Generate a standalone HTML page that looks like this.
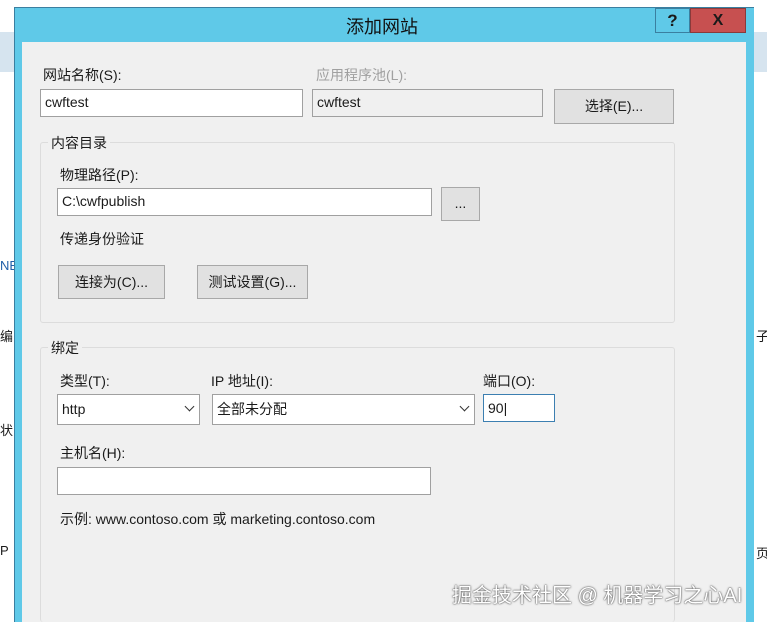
<!DOCTYPE html><html style="overflow:hidden;height:622px"><head><meta charset="utf-8"><style>
html,body{margin:0;overflow:hidden}
body{width:767px;height:622px;background:#fff;position:relative;font-family:"Liberation Sans","Noto Sans CJK SC",sans-serif;font-size:14px;color:#1a1a1a}
.a{position:absolute}
.in{position:absolute;background:#fff;border:1px solid #a0a0a0;box-sizing:border-box;padding-left:4px;line-height:24px;font-size:14px}
.btn{position:absolute;background:#e1e1e1;border:1px solid #a8a8a8;box-sizing:border-box;text-align:center;font-size:14px}
.grp{position:absolute;border:1px solid #dcdcdc;border-radius:3px;box-sizing:border-box}
.chev{position:absolute;right:6px;top:8px;width:6px;height:6px;border-right:1.5px solid #333;border-bottom:1.5px solid #333;transform:rotate(45deg)}
</style></head><body>
<div class="a" style="left:0;top:32px;width:14px;height:40px;background:#d6e4ef"></div>
<div class="a" style="left:752px;top:32px;width:15px;height:40px;background:#d6e4ef"></div>
<div class="a" style="left:0;top:258px;font-size:13px;color:#1f5fa8">NE</div>
<div class="a" style="left:0;top:326px;font-size:13px">编</div>
<div class="a" style="left:0;top:420px;font-size:13px">状</div>
<div class="a" style="left:0;top:543px;font-size:13px">P</div>
<div class="a" style="left:756px;top:326px;font-size:13px">子</div>
<div class="a" style="left:756px;top:543px;font-size:13px">页</div>
<div class="a" style="left:14px;top:7px;width:739px;height:615px;background:#5fc9e8;border-left:1px solid #3a7fa0;border-top:1px solid #3a7fa0"></div>
<div class="a" style="left:22px;top:42px;width:724px;height:580px;background:#f0f0f0"></div>
<div class="a" style="left:346px;top:13px;font-size:18px;color:#111">添加网站</div>
<div class="a" style="left:655px;top:8px;width:35px;height:25px;border:1px solid #3a7fa0;box-sizing:border-box;text-align:center;font-weight:bold;font-size:17px;line-height:23px">?</div>
<div class="a" style="left:690px;top:8px;width:56px;height:25px;background:#c75050;border:1px solid #8a3a3a;box-sizing:border-box;text-align:center;font-weight:bold;font-size:16px;line-height:23px">X</div>
<div class="a" style="left:43px;top:65px">网站名称(S):</div>
<div class="a" style="left:316px;top:65px;color:#a0a0a0">应用程序池(L):</div>
<div class="in" style="left:40px;top:89px;width:263px;height:28px">cwftest</div>
<div class="in" style="left:312px;top:89px;width:231px;height:28px;background:#f0f0f0">cwftest</div>
<div class="btn" style="left:554px;top:89px;width:120px;height:35px;line-height:33px">选择(E)...</div>
<div class="grp" style="left:40px;top:142px;width:635px;height:181px"></div>
<div class="a" style="left:48px;top:133px;background:#f0f0f0;padding:0 3px">内容目录</div>
<div class="a" style="left:60px;top:165px">物理路径(P):</div>
<div class="in" style="left:57px;top:188px;width:375px;height:28px">C:\cwfpublish</div>
<div class="btn" style="left:441px;top:187px;width:39px;height:34px;line-height:30px">...</div>
<div class="a" style="left:60px;top:229px">传递身份验证</div>
<div class="btn" style="left:58px;top:265px;width:107px;height:34px;line-height:32px">连接为(C)...</div>
<div class="btn" style="left:197px;top:265px;width:111px;height:34px;line-height:32px">测试设置(G)...</div>
<div class="grp" style="left:40px;top:347px;width:635px;height:275px;border-bottom:none"></div>
<div class="a" style="left:48px;top:338px;background:#f0f0f0;padding:0 3px">绑定</div>
<div class="a" style="left:60px;top:371px">类型(T):</div>
<div class="a" style="left:211px;top:371px">IP 地址(I):</div>
<div class="a" style="left:483px;top:371px">端口(O):</div>
<div class="in" style="left:57px;top:394px;width:143px;height:31px;line-height:29px">http<div class="chev"></div></div>
<div class="in" style="left:212px;top:394px;width:263px;height:31px;line-height:29px">全部未分配<div class="chev"></div></div>
<div class="in" style="left:483px;top:394px;width:72px;height:28px;border-color:#3c7fb1;line-height:26px">90|</div>
<div class="a" style="left:60px;top:443px">主机名(H):</div>
<div class="in" style="left:57px;top:467px;width:374px;height:28px"></div>
<div class="a" style="left:60px;top:509px">示例: www.contoso.com 或 marketing.contoso.com</div>
<div class="a" style="left:452px;top:579px;font-size:20px;color:#fff;text-shadow:0 0 2px #555,0 0 1px #333;white-space:nowrap">掘金技术社区 @ 机器学习之心AI</div>
</body></html>
